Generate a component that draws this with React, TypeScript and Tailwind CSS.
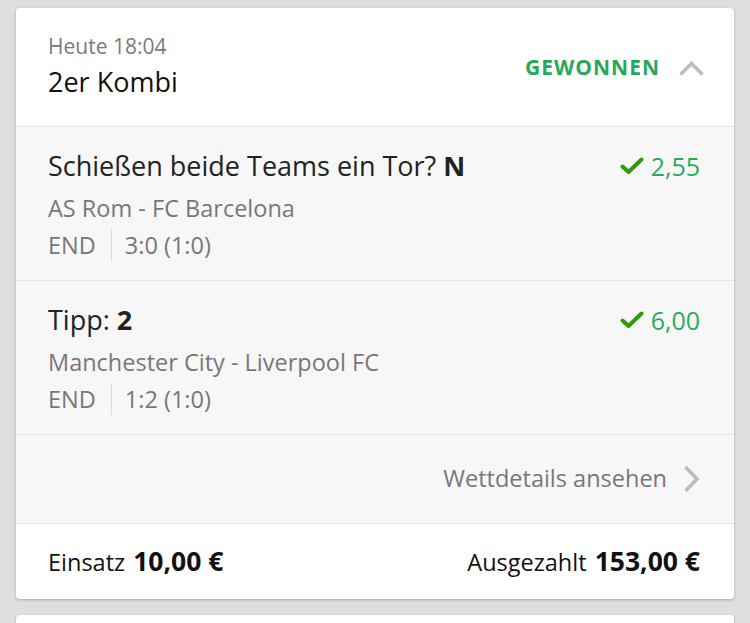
function Check() {
  return (
    <svg width="24" height="18" viewBox="0 0 24 18" className="mr-[7px]">
      <path d="M2.5 9.5 L8.5 15 L21.5 2.5" fill="none" stroke="#2f9a0e" strokeWidth="4" strokeLinecap="round" strokeLinejoin="round" />
    </svg>
  );
}

function CaretUp() {
  return (
    <svg width="27" height="17" viewBox="0 0 27 17">
      <path d="M2.5 14.5 L13.5 3.5 L24.5 14.5" fill="none" stroke="#bdbdbd" strokeWidth="3.6" />
    </svg>
  );
}

function CaretRight() {
  return (
    <svg width="17" height="28" viewBox="0 0 17 28">
      <path d="M2.5 2 L14 14 L2.5 26" fill="none" stroke="#bdbdbd" strokeWidth="3.6" />
    </svg>
  );
}

type Leg = {
  title: string;
  pick: string;
  odds: string;
  match: string;
  score: string;
};

const legs: Leg[] = [
  { title: 'Schießen beide Teams ein Tor?', pick: 'N', odds: '2,55', match: 'AS Rom - FC Barcelona', score: '3:0 (1:0)' },
  { title: 'Tipp:', pick: '2', odds: '6,00', match: 'Manchester City - Liverpool FC', score: '1:2 (1:0)' },
];

export default function App() {
  return (
    <div className="min-h-[623px] bg-[#dfdfe1] px-4 pt-2 font-['Open_Sans',sans-serif]">
      <div className="bg-white rounded-[4px] shadow-[0_1px_3px_rgba(0,0,0,0.25)] overflow-hidden">
        {/* Header */}
        <div className="flex items-center justify-between pl-8 pr-[29px] pt-[26px] pb-[28px] border-b border-[#e6e6e6]">
          <div>
            <p className="text-[21px] leading-[24px] text-[#7a7a7a]">Heute 18:04</p>
            <p className="mt-[8px] text-[27px] leading-[32px] text-[#111]">2er Kombi</p>
          </div>
          <div className="mt-[4px] flex items-center gap-[18px]">
            <span className="text-[21px] font-bold tracking-[1px] text-[#27a85a]">GEWONNEN</span>
            <CaretUp />
          </div>
        </div>

        {/* Legs */}
        {legs.map((leg) => (
          <div key={leg.match} className="bg-[#f7f7f7] border-b border-[#e6e6e6] pl-8 pr-[34px] pt-[22px] pb-[19px]">
            <div className="flex items-center justify-between">
              <p className="text-[27px] leading-[34px] text-[#222]">
                {leg.title} <span className="font-bold">{leg.pick}</span>
              </p>
              <div className="flex items-center">
                <Check />
                <span className="text-[25px] leading-[34px] text-[#2bab5e]">{leg.odds}</span>
              </div>
            </div>
            <p className="mt-[10px] text-[23.5px] leading-[30px] text-[#777]">{leg.match}</p>
            <div className="mt-[6px] flex items-center text-[23.5px] leading-[30px] text-[#777]">
              <span>END</span>
              <span className="ml-[15px] mr-[13px] h-[32px] w-px bg-[#dcdcdc]" />
              <span>{leg.score}</span>
            </div>
          </div>
        ))}

        {/* Details link */}
        <div className="bg-[#f7f7f7] border-b border-[#e6e6e6] flex items-center justify-end gap-4 pr-[34px] h-[89px]">
          <span className="text-[23.5px] text-[#777]">Wettdetails ansehen</span>
          <CaretRight />
        </div>

        {/* Footer */}
        <div className="flex items-center justify-between pl-8 pr-[34px] h-[75px] text-[#111]">
          <p className="text-[23.5px]">
            Einsatz <span className="ml-0.5 text-[26.5px] font-bold">10,00 €</span>
          </p>
          <p className="text-[23.5px]">
            Ausgezahlt <span className="ml-0.5 text-[26.5px] font-bold">153,00 €</span>
          </p>
        </div>
      </div>
      <div className="mt-4 h-[20px] bg-white rounded-t-[4px] shadow-[0_1px_3px_rgba(0,0,0,0.25)]" />
    </div>
  );
}
